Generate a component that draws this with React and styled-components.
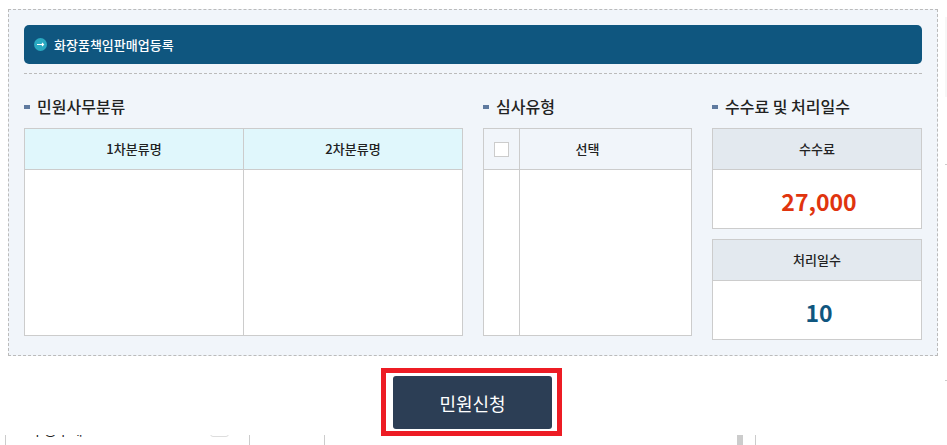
import React from "react";
import styled, { createGlobalStyle } from "styled-components";

const GlobalStyle = createGlobalStyle`
  html, body {
    margin: 0;
    padding: 0;
    height: 445px;
    overflow: hidden;
  }
  * {
    box-sizing: border-box;
  }
  body {
    font-family: "Noto Sans CJK KR", "Noto Sans", sans-serif;
    color: #222;
  }
`;

const Page = styled.div`
  display: grid;
  grid-template-columns: 945px 2px;
  width: 947px;
  height: 445px;
  overflow: hidden;
`;

const Main = styled.div`
  padding: 9px 0 0 8px;
`;

const Rail = styled.div`
  display: flex;
  flex-direction: column;
  padding-top: 17px;
`;

const RailBlock = styled.div`
  height: 80px;
  background: #f7f7f7;
`;

const RailTick = styled.div`
  height: 1px;
  margin-top: ${(p) => p.$gap}px;
  background: #ccc;
`;

const Panel = styled.section`
  width: 930px;
  height: 347px;
  padding: 15px;
  background: #f1f5fa;
  border: 1px dashed #bbb;
`;

const TitleBar = styled.div`
  display: flex;
  align-items: center;
  gap: 7px;
  height: 39px;
  padding-left: 10px;
  border-radius: 5px;
  background: #0f567f;
`;

const TitleText = styled.h2`
  margin: 0;
  font-size: 13px;
  font-weight: 500;
  color: #fff;
`;

const Divider = styled.div`
  margin-top: 9px;
  border-top: 1px dashed #bbb;
`;

const Columns = styled.div`
  display: grid;
  grid-template-columns: 439px 209px 210px;
  column-gap: 20px;
  margin-top: 20px;
`;

const Column = styled.div`
  display: flex;
  flex-direction: column;
`;

const Heading = styled.h3`
  display: flex;
  align-items: center;
  gap: 7px;
  height: 24px;
  margin: 0 0 10px;
  font-size: 16px;
  font-weight: 500;
  color: #222;

  &::before {
    content: "";
    width: 6px;
    height: 4px;
    margin-top: 2px;
    background: #5f7a9f;
  }
`;

const Grid = styled.div`
  display: grid;
  grid-template-columns: ${(p) => p.$cols};
  grid-template-rows: 41px 166px;
  height: 208px;
  background: #fff;
  border: 1px solid #ccc;
`;

const HeadCell = styled.div`
  display: flex;
  align-items: center;
  justify-content: center;
  padding-bottom: 2px;
  padding-right: ${(p) => p.$shift || 0}px;
  font-size: 13px;
  font-weight: 500;
  color: #222;
  background: ${(p) => p.$bg};
  border-bottom: 1px solid #ccc;
  border-left: ${(p) => (p.$first ? "0" : "1px solid #ccc")};
`;

const BodyCell = styled.div`
  border-left: ${(p) => (p.$first ? "0" : "1px solid #ccc")};
`;

const CheckBox = styled.span`
  width: 15px;
  height: 15px;
  margin-top: 2px;
  background: #fff;
  border: 1px solid #ccc;
`;

const Stack = styled.div`
  display: flex;
  flex-direction: column;
  gap: 10px;
`;

const FeeCard = styled.div`
  display: grid;
  grid-template-rows: 41px 58px;
  height: 101px;
  background: #fff;
  border: 1px solid #ccc;
`;

const FeeValue = styled.div`
  display: flex;
  align-items: center;
  justify-content: center;
  padding: 4px 0 0 4px;
  font-size: 23px;
  font-weight: 700;
  color: ${(p) => p.$color};
`;

const ActionRow = styled.div`
  display: flex;
  justify-content: center;
  width: 929px;
  height: 53px;
  margin-top: 20px;
`;

const SubmitButton = styled.button`
  position: relative;
  width: 159px;
  height: 53px;
  border: 0;
  border-radius: 3px;
  font-family: inherit;
  font-size: 18px;
  font-weight: 400;
  color: #fff;
  background: #2c3e55;

  /* 강조 표시 */
  &::after {
    content: "";
    box-sizing: border-box;
    position: absolute;
    left: -12px;
    top: -8px;
    width: 181px;
    height: 68px;
    border: 5px solid #ed1c24;
  }
`;

const NextRow = styled.div`
  display: grid;
  grid-template-columns: 244px 75px 413px 18px 189px;
  width: 939px;
  height: 10px;
  margin: 6px 0 0 -3px;
  overflow: hidden;
`;

const NextCell = styled.div`
  display: flex;
  align-items: flex-start;
  overflow: hidden;
  padding-left: ${(p) => p.$pad || 0}px;
  border-left: ${(p) => (p.$line ? "1px solid #ccc" : "0")};
`;

const NextLabel = styled.span`
  margin-top: -16px;
  font-size: 14px;
  line-height: 20px;
  white-space: nowrap;
`;

const NextCheck = styled.span`
  width: 19px;
  height: 15px;
  margin: -13px 20px 0 auto;
  border: 1px solid #ddd;
  border-radius: 3px;
`;

const NextBar = styled.div`
  width: 6px;
  height: 10px;
  background: #ccc;
`;

function ArrowIcon() {
  return (
    <svg width="13" height="13" viewBox="0 0 13 13" aria-hidden="true">
      <circle cx="6.5" cy="6.5" r="6.5" fill="#2aa9c1" />
      <path d="M3 6.5h6.5M8 5l1.5 1.5L8 8" fill="none" stroke="#fff" strokeWidth="1.1" />
    </svg>
  );
}

function App() {
  return (
    <>
      <GlobalStyle />
      <Page>
        <Main>
          <Panel>
            <TitleBar>
              <ArrowIcon />
              <TitleText>화장품책임판매업등록</TitleText>
            </TitleBar>
            <Divider />
            <Columns>
              <Column>
                <Heading>민원사무분류</Heading>
                <Grid $cols="218px 219px">
                  <HeadCell $first $bg="#e0f7fc">1차분류명</HeadCell>
                  <HeadCell $bg="#e0f7fc">2차분류명</HeadCell>
                  <BodyCell $first />
                  <BodyCell />
                </Grid>
              </Column>
              <Column>
                <Heading>심사유형</Heading>
                <Grid $cols="35px 172px">
                  <HeadCell $first $bg="#f1f5fa"><CheckBox /></HeadCell>
                  <HeadCell $bg="#f1f5fa" $shift={36}>선택</HeadCell>
                  <BodyCell $first />
                  <BodyCell />
                </Grid>
              </Column>
              <Column>
                <Heading>수수료 및 처리일수</Heading>
                <Stack>
                  <FeeCard>
                    <HeadCell $first $bg="#e3e9ef">수수료</HeadCell>
                    <FeeValue $color="#e0340e">27,000</FeeValue>
                  </FeeCard>
                  <FeeCard>
                    <HeadCell $first $bg="#e3e9ef">처리일수</HeadCell>
                    <FeeValue $color="#0f567f">10</FeeValue>
                  </FeeCard>
                </Stack>
              </Column>
            </Columns>
          </Panel>
          <ActionRow>
            <SubmitButton type="button">민원신청</SubmitButton>
          </ActionRow>
          <NextRow>
            <NextCell $line $pad={25}>
              <NextLabel>구공구네</NextLabel>
              <NextCheck />
            </NextCell>
            <NextCell $line />
            <NextCell $line />
            <NextCell><NextBar /></NextCell>
            <NextCell $line />
          </NextRow>
        </Main>
        <Rail>
          <RailBlock />
          <RailTick $gap={67} />
          <RailTick $gap={215} />
        </Rail>
      </Page>
    </>
  );
}

export default App;
